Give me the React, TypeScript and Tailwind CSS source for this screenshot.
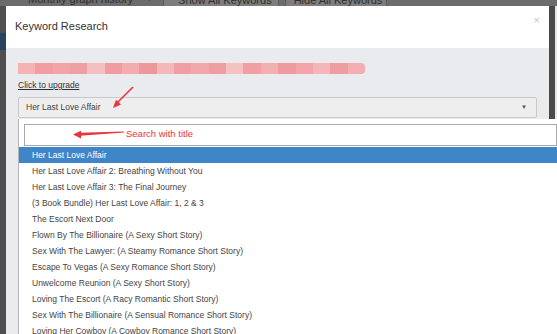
import React from "react";

const books = [
  "Her Last Love Affair",
  "Her Last Love Affair 2: Breathing Without You",
  "Her Last Love Affair 3: The Final Journey",
  "(3 Book Bundle) Her Last Love Affair: 1, 2 & 3",
  "The Escort Next Door",
  "Flown By The Billionaire (A Sexy Short Story)",
  "Sex With The Lawyer: (A Steamy Romance Short Story)",
  "Escape To Vegas (A Sexy Romance Short Story)",
  "Unwelcome Reunion (A Sexy Short Story)",
  "Loving The Escort (A Racy Romantic Short Story)",
  "Sex With The Billionaire (A Sensual Romance Short Story)",
  "Loving Her Cowboy (A Cowboy Romance Short Story)",
];

const blurTiles = [
  "#f4b4b6", "#f19da1", "#f2a5a8", "#efa0a3", "#f5bfc1", "#f09ca0", "#f3acaf",
  "#ee989c", "#f4b8ba", "#f0a0a4", "#f2a8ab", "#ef9ea2", "#f5c2c4", "#f09fa3",
  "#f3b0b3", "#ee9a9e", "#f2a6a9", "#f4b6b8", "#ef9da1", "#f3aeb1",
];

export default function App() {
  return (
    <div className="relative w-[557px] h-[334px] overflow-hidden flex flex-col bg-[#4f4f4f] font-['Liberation_Sans',Arial,sans-serif]">
      {/* page toolbar peeking out behind the backdrop */}
      <div className="h-[6px] overflow-hidden bg-[#6c6c6c] shrink-0">
        <div className="flex items-center -mt-[8px] h-[14px] text-[11px] text-[#2e2e2e] whitespace-nowrap">
          <span className="ml-[28px]">Monthly graph history</span>
          <span className="ml-[12px] text-[8px]">▼</span>
          <span className="ml-[10px] h-full bg-[#7d7d7d] border-x border-[#5a5a5a] pl-[14px] pr-[6px]">Show All Keywords</span>
          <span className="ml-[6px] h-full bg-[#7d7d7d] border-x border-[#5a5a5a] pl-[8px] pr-[4px]">Hide All Keywords</span>
        </div>
      </div>

      <div className="flex flex-1">
        <div className="w-[6px] shrink-0 flex flex-col">
          <div className="mt-[27px] h-[17px] bg-[#27445f]" />
        </div>

        {/* modal */}
        <div className="w-[543px] flex flex-col">
          <div className="h-[42px] bg-white flex justify-between px-[9px]">
            <h4 className="pt-[14px] text-[11px] leading-[12px] text-[#333]">Keyword Research</h4>
            <span className="pt-[8px] text-[11px] leading-[12px] text-[#c4c4c4]">×</span>
          </div>
          <div className="flex-1 bg-[#e9ebee] px-[12px] pt-[15px]">
            <div className="flex h-[11px] w-[347px] rounded-r-[4px] overflow-hidden">
              {blurTiles.map((c, i) => (
                <div key={i} className="flex-1" style={{ background: c }} />
              ))}
            </div>
            <a className="block mt-[5px] w-fit text-[8.5px] leading-[12px] text-[#333] underline">Click to upgrade</a>
            <div className="mt-[6px] h-[21px] flex items-center justify-between bg-[#eeeeee] border border-[#c9c9c9] rounded-[2px] pl-[7px] pr-[9px] text-[8.5px] text-[#444]">
              <span>Her Last Love Affair</span>
              <span className="text-[6px] text-[#555]">▼</span>
            </div>
          </div>
        </div>

        <div className="flex-1 flex">
          <div className="w-[6px] bg-[#4a4a4a]" />
          <div className="flex-1 bg-[#e6e6e6]" />
        </div>
      </div>

      {/* open select dropdown */}
      <div className="absolute left-[18px] top-[119px] right-0 bottom-0 bg-white border-l border-[#b5b5b5] pt-[5px]">
        <div className="ml-[5px] h-[22px] border border-[#a9a9a9] bg-white" />
        <ul className="mt-[1px] text-[8.5px] text-[#444]">
          {books.map((b, i) => (
            <li
              key={b}
              className={
                i === 0
                  ? "h-[16px] flex items-center pl-[13px] bg-[#3f86c8] text-white"
                  : "h-[16px] flex items-center pl-[13px]"
              }
            >
              {b}
            </li>
          ))}
        </ul>
      </div>

      {/* red annotations */}
      <svg className="absolute inset-0 pointer-events-none" width="557" height="334">
        <line x1="133" y1="87" x2="117" y2="103" stroke="#e8353a" strokeWidth="1.6" />
        <polygon points="113,108 121,104.6 116,99.8" fill="#e8353a" />
        <polygon points="124,131.6 124,132.6 80,135.8 80,132.8" fill="#e8353a" />
        <polygon points="73,134.5 81,138.5 81,130.8" fill="#e8353a" />
      </svg>
      <span className="absolute left-[126px] top-[128px] text-[9.5px] leading-[12px] text-[#e8353a] whitespace-nowrap">
        Search with title
      </span>
    </div>
  );
}
